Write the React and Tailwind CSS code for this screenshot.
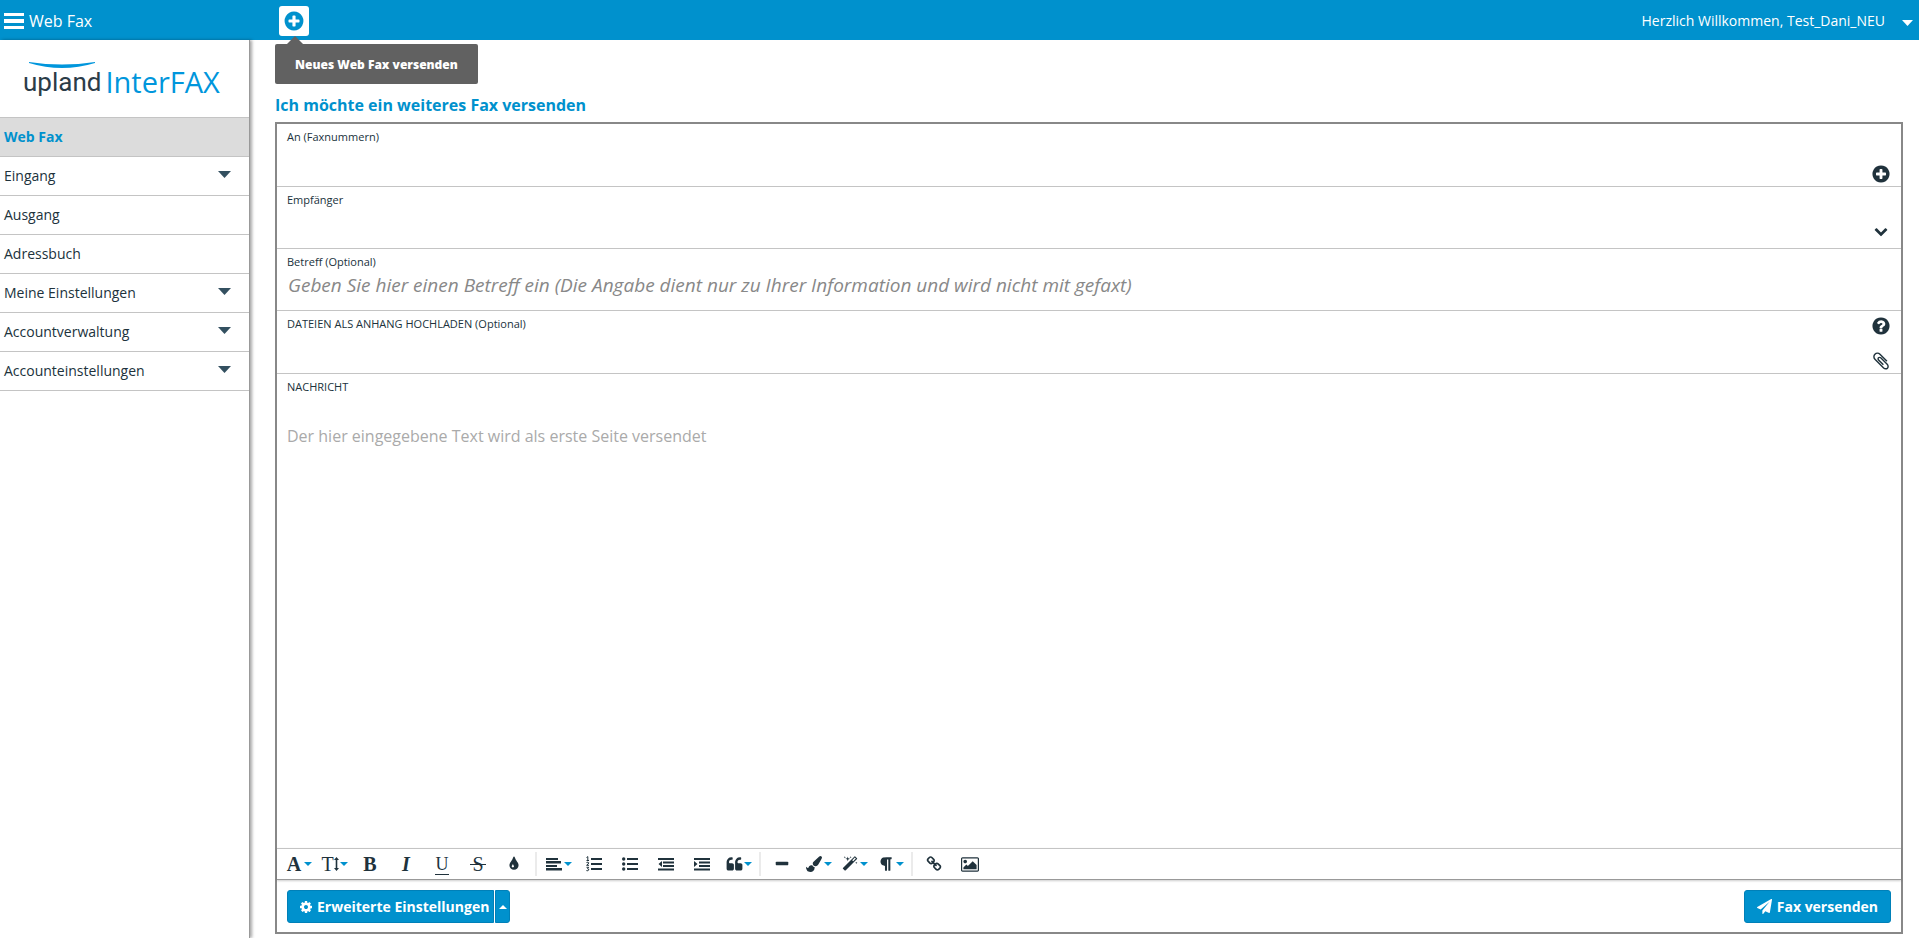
import { useState } from "react";
import clsx from "clsx";

const ICONS = {
  plusCircle:
    "M1344 960v-128q0-26-19-45t-45-19h-256v-256q0-26-19-45t-45-19h-128q-26 0-45 19t-19 45v256h-256q-26 0-45 19t-19 45v128q0 26 19 45t45 19h256v256q0 26 19 45t45 19h128q26 0 45-19t19-45v-256h256q26 0 45-19t19-45zm320-64q0 209-103 385.5t-279.5 279.5-385.5 103-385.5-103-279.5-279.5-103-385.5 103-385.5 279.5-279.5 385.5-103 385.5 103 279.5 279.5 103 385.5z",
  questionCircle:
    "M1024 1376v-192q0-14-9-23t-23-9h-192q-14 0-23 9t-9 23v192q0 14 9 23t23 9h192q14 0 23-9t9-23zm256-672q0-88-55.5-163t-138.5-116-170-41q-243 0-371 213-15 24 8 42l132 100q7 6 19 6 16 0 25-12 53-68 86-92 34-24 86-24 48 0 85.5 26t37.5 59q0 38-20 61t-68 45q-63 28-115.5 86.5t-52.5 125.5v36q0 14 9 23t23 9h192q14 0 23-9t9-23q0-19 21.5-49.5t54.5-49.5q32-18 49-28.5t46-35 44.5-48 28-60.5 12.5-81zm384 192q0 209-103 385.5t-279.5 279.5-385.5 103-385.5-103-279.5-279.5-103-385.5 103-385.5 279.5-279.5 385.5-103 385.5 103 279.5 279.5 103 385.5z",
  chevronDown:
    "M1683 808l-742 741q-19 19-45 19t-45-19l-742-741q-19-19-19-45.5t19-45.5l166-165q19-19 45-19t45 19l531 531 531-531q19-19 45-19t45 19l166 165q19 19 19 45.5t-19 45.5z",
  paperclip:
    "M1596 1385q0 117-79 196t-196 79q-135 0-235-100l-777-776q-113-115-113-271 0-159 110-270t269-111q158 0 273 113l605 606q10 10 10 22 0 16-30.5 46.5t-46.5 30.5q-13 0-23-10l-606-607q-79-77-181-77-106 0-179 75t-73 181q0 105 76 181l776 777q63 63 145 63 64 0 106-42t42-106q0-82-63-145l-581-581q-26-24-60-24-29 0-48 19t-19 48q0 32 25 59l410 410q10 10 10 22 0 16-31 47t-47 31q-12 0-22-10l-410-410q-63-61-63-149 0-82 57-139t139-57q88 0 149 63l581 581q100 98 100 235z",
  cog: "M1152 896q0-106-75-181t-181-75-181 75-75 181 75 181 181 75 181-75 75-181zm512-109v222q0 12-8 23t-20 13l-185 28q-19 54-39 91 35 50 107 138 10 12 10 25t-9 23q-27 37-99 108t-94 71q-12 0-26-9l-138-108q-44 23-91 38-16 136-29 186-7 28-36 28h-222q-14 0-24.5-8.5t-11.5-21.5l-28-184q-49-16-90-37l-141 107q-10 9-25 9-14 0-25-11-126-114-165-168-7-10-7-23 0-12 8-23 15-21 51-66.5t54-70.5q-27-50-41-99l-183-27q-13-2-21-12.5t-8-23.5v-222q0-12 8-23t19-13l186-28q14-46 39-92-40-57-107-138-10-12-10-24 0-10 9-23 26-36 98.5-107.5t94.5-71.5q13 0 26 10l138 107q44-23 91-38 16-136 29-186 7-28 36-28h222q14 0 24.5 8.5t11.5 21.5l28 184q49 16 90 37l142-107q9-9 24-9 13 0 25 10 129 119 165 170 7 8 7 22 0 12-8 23-15 21-51 66.5t-54 70.5q26 50 41 98l183 28q13 2 21 12.5t8 23.5z",
  paperPlane:
    "M1764 11q33 24 27 64l-256 1536q-5 29-32 45-14 8-31 8-11 0-24-5l-453-185-242 295q-18 23-49 23-13 0-22-4-19-7-30.5-23.5t-11.5-36.5v-349l864-1059-1069 925-395-162q-37-14-40-55-2-40 32-59l1664-960q15-9 32-9 20 0 36 11z",
  tint: "M896 1152q0-36-20-69-1-1-15.5-22.5t-25.5-38-25-44-21-50.5q-4-16-21-16t-21 16q-7 23-21 50.5t-25 44-25.5 38-15.5 22.5q-20 33-20 69 0 53 37.5 90.5t90.5 37.5 90.5-37.5 37.5-90.5zm512-128q0 212-150 362t-362 150-362-150-150-362q0-145 81-275 6-9 62.5-90.5t101-151 99.5-178 83-201.5q9-30 34-47t51-17 51.5 17 33.5 47q28 93 83 201.5t99.5 178 101 151 62.5 90.5q81 127 81 275z",
  quote:
    "M832 960v384q0 80-56 136t-136 56h-384q-80 0-136-56t-56-136v-704q0-104 40.5-198.5t109.5-163.5 163.5-109.5 198.5-40.5h64q26 0 45 19t19 45v128q0 26-19 45t-45 19h-64q-106 0-181 75t-75 181v32q0 40 28 68t68 28h224q80 0 136 56t56 136zm896 0v384q0 80-56 136t-136 56h-384q-80 0-136-56t-56-136v-704q0-104 40.5-198.5t109.5-163.5 163.5-109.5 198.5-40.5h64q26 0 45 19t19 45v128q0 26-19 45t-45 19h-64q-106 0-181 75t-75 181v32q0 40 28 68t68 28h224q80 0 136 56t56 136z",
  minus:
    "M1600 736v192q0 40-28 68t-68 28h-1216q-40 0-68-28t-28-68v-192q0-40 28-68t68-28h1216q40 0 68 28t28 68z",
  brush:
    "M1615 0q70 0 122.5 46.5t52.5 116.5q0 63-45 151-332 629-465 752-97 91-218 91-126 0-216.5-92.5t-90.5-219.5q0-128 92-212l638-579q59-54 130-54zm-909 1034q39 76 106.5 130t150.5 76l1 71q4 213-129.5 347t-348.5 134q-123 0-218-46.5t-152.5-127.5-86.5-183-29-220q7 5 41 30t62 44.5 59 36.5 46 17q41 0 55-37 25-66 57.5-112.5t69.5-76 88-47.5 103-25.5 125-10.5z",
  magic:
    "M1254 581l293-293-107-107-293 293zm447-293q0 27-18 45l-1286 1286q-18 18-45 18t-45-18l-198-198q-18-18-18-45t18-45l1286-1286q18-18 45-18t45 18l198 198q18 18 18 45zm-1351-190l98 30-98 30-30 98-30-98-98-30 98-30 30-98zm350 162l196 60-196 60-60 196-60-196-196-60 196-60 60-196zm930 478l98 30-98 30-30 98-30-98-98-30 98-30 30-98zm-640-640l98 30-98 30-30 98-30-98-98-30 98-30 30-98z",
  paragraph:
    "M1534 189v73q0 29-18.5 61t-42.5 32q-50 0-54 1-26 6-32 31-3 11-3 64v1152q0 25-18 43t-43 18h-108q-25 0-43-18t-18-43v-1218h-143v1218q0 25-17.5 43t-43.5 18h-108q-26 0-43.5-18t-17.5-43v-496q-147-12-245-59-126-58-192-179-64-117-64-259 0-166 88-286 88-118 209-159 111-37 417-37h479q25 0 43 18t18 43z",
  link: "M1520 1216q0-40-28-68l-208-208q-28-28-68-28-42 0-72 32 3 3 19 18.5t21.5 21.5 15 19 13 25.5 3.5 27.5q0 40-28 68t-68 28q-15 0-27.5-3.5t-25.5-13-19-15-21.5-21.5-18.5-19q-33 31-33 73 0 40 28 68l206 207q27 27 68 27 40 0 68-26l147-146q28-28 28-67zm-703-705q0-40-28-68l-206-207q-28-28-68-28-39 0-68 27l-147 146q-28 28-28 67 0 40 28 68l208 208q27 27 68 27 42 0 72-31-3-3-19-18.5t-21.5-21.5-15-19-13-25.5-3.5-27.5q0-40 28-68t68-28q15 0 27.5 3.5t25.5 13 19 15 21.5 21.5 18.5 19q33-31 33-73zm895 705q0 120-85 203l-147 146q-83 83-203 83-121 0-204-85l-206-207q-83-83-83-203 0-123 88-209l-88-88q-86 88-208 88-120 0-204-84l-208-208q-84-84-84-204t85-203l147-146q83-83 203-83 121 0 204 85l206 207q83 83 83 203 0 123-88 209l88 88q86-88 208-88 120 0 204 84l208 208q84 84 84 204z",
  image:
    "M576 576q0 80-56 136t-136 56-136-56-56-136 56-136 136-56 136 56 56 136zm1024 384v448h-1408v-192l320-320 160 160 512-512zm96-704h-1600q-13 0-22.5 9.5t-9.5 22.5v1216q0 13 9.5 22.5t22.5 9.5h1600q13 0 22.5-9.5t9.5-22.5v-1216q0-13-9.5-22.5t-22.5-9.5zm160 32v1216q0 66-47 113t-113 47h-1600q-66 0-113-47t-47-113v-1216q0-66 47-113t113-47h1600q66 0 113 47t47 113z",
};

function Icon({ name, className }) {
  return (
    <svg
      viewBox={name === "image" ? "-64 0 1920 1792" : "0 0 1792 1792"}
      className={clsx("shrink-0 fill-current", className)}
      aria-hidden="true"
    >
      <path d={ICONS[name]} />
    </svg>
  );
}

function Caret({ className, up = false }) {
  return (
    <svg
      viewBox="0 0 8 4"
      preserveAspectRatio="none"
      className={clsx("shrink-0 fill-current", className)}
      aria-hidden="true"
    >
      <path d={up ? "M0 4h8L4 0z" : "M0 0h8L4 4z"} />
    </svg>
  );
}

// 16x14 line icons: lists, indents, alignment
function Lines({ children }) {
  return (
    <svg viewBox="0 0 16 14" className="h-[14px] w-4 fill-current" aria-hidden="true">
      {children}
    </svg>
  );
}

function Letter({ children, className }) {
  return (
    <span className={clsx("font-['Liberation_Serif',serif] leading-5", className)}>
      {children}
    </span>
  );
}

const menu = [
  { label: "Web Fax", active: true },
  { label: "Eingang", children: true },
  { label: "Ausgang" },
  { label: "Adressbuch" },
  { label: "Meine Einstellungen", children: true },
  { label: "Accountverwaltung", children: true },
  { label: "Accounteinstellungen", children: true },
];

const toolbar = [
  [
    { title: "Schriftart", menu: true, icon: <Letter className="text-xl font-bold">A</Letter> },
    {
      title: "Schriftgröße",
      menu: true,
      icon: (
        <span className="flex items-center">
          <Letter className="text-xl">T</Letter>
          <svg viewBox="0 0 5 14" className="h-[14px] w-[5px] fill-current" aria-hidden="true">
            <path d="M2.500 0L5 3H3.300v8H5l-2.500 3L0 11h1.700V3H0z" />
          </svg>
        </span>
      ),
    },
    { title: "Fett", icon: <Letter className="text-xl font-bold">B</Letter> },
    { title: "Kursiv", icon: <Letter className="text-xl font-bold italic">I</Letter> },
    {
      title: "Unterstrichen",
      icon: (
        <span className="flex w-[14px] justify-center border-b border-current">
          <Letter className="text-lg/[15px] font-medium">U</Letter>
        </span>
      ),
    },
    {
      title: "Durchgestrichen",
      icon: (
        <span className="relative flex w-4 justify-center">
          <Letter className="text-xl">S</Letter>
          <span className="absolute inset-x-0 top-[10px] h-px bg-current" />
        </span>
      ),
    },
    { title: "Farben", icon: <Icon name="tint" className="size-4" /> },
  ],
  [
    {
      title: "Ausrichten",
      menu: true,
      icon: (
        <Lines>
          <path d="M0 1h12v2H0zM0 4h15v2.500H0zM0 8h11v2H0zM0 11h16v2.500H0z" />
        </Lines>
      ),
    },
    {
      title: "Nummerierte Liste",
      icon: (
        <svg viewBox="0 0 16 16" className="size-4 fill-current" aria-hidden="true">
          <path d="M5 2h11v2H5zM5 7h11v2H5zM5 12h11v2H5z" />
          <path
            d="M.5 1.500L1.800.6V4.500M.5 4.500H3M.5 6.500q2-1 2.200.3Q2.600 8 .6 9.300H3M.5 11.300h2.200L1.500 12.700q1.500 0 1.300 1.200-.6 1.300-2.400.7"
            className="fill-none stroke-current"
          />
        </svg>
      ),
    },
    {
      title: "Aufzählung",
      icon: (
        <Lines>
          <path d="M5 1h11v2H5zM5 6h11v2H5zM5 11h11v2H5z" />
          <circle cx="1.700" cy="2" r="1.700" />
          <circle cx="1.700" cy="7" r="1.700" />
          <circle cx="1.700" cy="12" r="1.700" />
        </Lines>
      ),
    },
    {
      title: "Einzug verkleinern",
      icon: (
        <Lines>
          <path d="M0 1h16v2H0zM5 4.500h11v2H5zM5 8h11v2H5zM0 11.500h16v2H0zM4 4v6L.5 7z" />
        </Lines>
      ),
    },
    {
      title: "Einzug vergrößern",
      icon: (
        <Lines>
          <path d="M0 1h16v2H0zM5 4.500h11v2H5zM5 8h11v2H5zM0 11.500h16v2H0zM0 4v6l3.500-3z" />
        </Lines>
      ),
    },
    { title: "Zitat", menu: true, icon: <Icon name="quote" className="size-[17px]" /> },
  ],
  [
    { title: "Horizontale Linie", icon: <Icon name="minus" className="size-4" /> },
    { title: "Absatzstil", menu: true, icon: <Icon name="brush" className="size-4" /> },
    { title: "Inline-Stil", menu: true, icon: <Icon name="magic" className="size-4" /> },
    { title: "Absatzformat", menu: true, icon: <Icon name="paragraph" className="size-4" /> },
  ],
  [
    { title: "Link einfügen", icon: <Icon name="link" className="size-4" /> },
    { title: "Bild einfügen", icon: <Icon name="image" className="h-[17px] w-[18px]" /> },
  ],
];

function Header() {
  return (
    <header className="flex h-10 items-center bg-[#0091cd] pt-[2px] text-white">
      <div className="flex w-[279px] items-center gap-[5px] pl-1">
        <button type="button" aria-label="Menü" className="flex w-5 flex-col gap-[3px]">
          <span className="h-[3px] bg-white" />
          <span className="h-[4px] bg-white" />
          <span className="h-[3px] bg-white" />
        </button>
        <span className="text-base">Web Fax</span>
      </div>

      <div className="relative">
        <button
          type="button"
          aria-describedby="new-fax-tip"
          aria-label="Neues Web Fax"
          className="flex size-[30px] items-center justify-center rounded-[3px] bg-white text-[#0091cd]"
        >
          <Icon name="plusCircle" className="size-[22px]" />
        </button>
        <div
          id="new-fax-tip"
          role="tooltip"
          className="absolute top-[38px] -left-1 z-10 rounded-[2px] bg-[#616161] px-5 pt-px text-xs leading-[39px] font-extrabold whitespace-nowrap"
        >
          <Caret up className="absolute -top-2 left-3 h-2 w-4 text-[#616161]" />
          Neues Web Fax versenden
        </div>
      </div>

      <button type="button" className="ml-auto flex items-center gap-[17px] pr-[6px] text-sm">
        Herzlich Willkommen, Test_Dani_NEU
        <Caret className="mt-1 h-[6px] w-[11px]" />
      </button>
    </header>
  );
}

function Sidebar() {
  return (
    <aside className="w-[250px] shrink-0 border-r border-[#999] shadow-[2px_0_3px_rgba(0,0,0,0.35)]">
      <a href="#" aria-label="upland InterFAX" className="flex h-[77px] items-end gap-1 pb-[19px] pl-[23px]">
        <span className="relative font-['Roboto',sans-serif] text-[26px] leading-8 text-[#2b3c48]">
          upland
          <svg
            viewBox="0 0 66 6"
            className="absolute -top-1 left-[6px] h-[6px] w-[66px] fill-[#0096dc]"
            aria-hidden="true"
          >
            <path d="M0 0Q33 5 66 0V1Q33 11 0 1z" />
          </svg>
        </span>
        <span className="text-[29px] leading-8 text-[#0096dc]">InterFAX</span>
      </a>
      <nav className="border-t border-[#c4c4c4]">
        {menu.map((item) => (
          <a
            key={item.label}
            href="#"
            className={clsx(
              "flex h-[39px] items-center justify-between border-b border-[#c4c4c4] pr-[18px] pl-1 text-sm",
              item.active && "bg-[#dcdcdc] font-bold text-[#0091cd]",
            )}
          >
            {item.label}
            {item.children && <Caret className="mb-[3px] h-[7px] w-[13px] text-[#335060]" />}
          </a>
        ))}
      </nav>
    </aside>
  );
}

function Toolbar() {
  return (
    <div
      role="toolbar"
      aria-label="Textformatierung"
      className="flex h-8 items-center border-t border-b border-t-[#c4c4c4] border-b-[#999] pl-[3px] shadow-[0_1px_2px_rgba(0,0,0,0.2)]"
    >
      {toolbar.map((group, i) => (
        <div key={i} className="flex items-center">
          {i > 0 && <span className="mx-[3px] h-6 w-[2px] bg-[#ebebeb]" />}
          {group.map((item) => (
            <button
              key={item.title}
              type="button"
              title={item.title}
              className={clsx("flex h-[30px] w-9 items-center", item.menu ? "pl-1" : "justify-center")}
            >
              {item.menu ? (
                <>
                  <span className="flex w-5 justify-center">{item.icon}</span>
                  <Caret className="h-1 w-2 text-[#0091cd]" />
                </>
              ) : (
                item.icon
              )}
            </button>
          ))}
        </div>
      ))}
    </div>
  );
}

const row = "relative flex flex-col border-b border-[#c4c4c4] px-[10px] pt-[5px]";
const label = "text-[11px] leading-[15px]";

function FaxForm() {
  const [subject, setSubject] = useState("");
  const [message, setMessage] = useState("");

  return (
    <form
      onSubmit={(e) => e.preventDefault()}
      className="flex flex-1 flex-col border-2 border-[#888]"
    >
      <div className={clsx(row, "h-[63px]")}>
        <label htmlFor="to" className={label}>
          An (Faxnummern)
        </label>
        <div className="flex flex-1 items-end">
          <input id="to" className="h-8 flex-1 outline-none" />
          <button type="button" aria-label="Hinzufügen" className="pb-[2px]">
            <Icon name="plusCircle" className="size-5" />
          </button>
        </div>
      </div>

      <div className={clsx(row, "h-[62px]")}>
        <label htmlFor="recipient" className={label}>
          Empfänger
        </label>
        <div className="flex flex-1 items-center">
          <select id="recipient" className="h-8 flex-1 appearance-none outline-none">
            <option></option>
          </select>
          <Icon name="chevronDown" className="mt-[6px] mr-[3px] size-[14px]" />
        </div>
      </div>

      <div className={clsx(row, "h-[62px]")}>
        <label htmlFor="subject" className={label}>
          Betreff (Optional)
        </label>
        <input
          id="subject"
          value={subject}
          onChange={(e) => setSubject(e.target.value)}
          placeholder="Geben Sie hier einen Betreff ein (Die Angabe dient nur zu Ihrer Information und wird nicht mit gefaxt)"
          className="h-8 pl-px text-[19px] italic outline-none placeholder:text-[#888]"
        />
      </div>

      <div className={clsx(row, "h-[63px]")}>
        <div className="flex items-start justify-between">
          <label htmlFor="files" className={label}>
            DATEIEN ALS ANHANG HOCHLADEN (Optional)
          </label>
          <button type="button" aria-label="Hilfe">
            <Icon name="questionCircle" className="size-5" />
          </button>
        </div>
        <label htmlFor="files" className="mt-[15px] self-end" aria-label="Datei auswählen">
          <Icon name="paperclip" className="size-5" />
        </label>
        <input id="files" type="file" className="sr-only" />
      </div>

      <div className="flex flex-1 flex-col px-[10px] pt-[5px]">
        <label htmlFor="message" className={label}>
          NACHRICHT
        </label>
        <textarea
          id="message"
          value={message}
          onChange={(e) => setMessage(e.target.value)}
          placeholder="Der hier eingegebene Text wird als erste Seite versendet"
          className="mt-[30px] flex-1 resize-none text-base outline-none placeholder:text-[#aaa]"
        />
      </div>

      <Toolbar />

      <div className="flex justify-between px-[10px] pt-[10px] pb-[9px] text-sm font-bold text-white">
        <div className="flex gap-px">
          <button
            type="button"
            className="flex h-[33px] items-center gap-1 rounded-l-[3px] border border-[#0080b8] bg-[#0091cd] pr-1 pl-[11px]"
          >
            <Icon name="cog" className="size-[14px]" />
            Erweiterte Einstellungen
          </button>
          <button
            type="button"
            aria-label="Weitere Optionen"
            className="flex w-[15px] items-center justify-center rounded-r-[3px] border border-[#0080b8] bg-[#0091cd]"
          >
            <Caret up className="h-1 w-2" />
          </button>
        </div>
        <button
          type="submit"
          className="flex h-[33px] items-center gap-[5px] rounded-[3px] border border-[#0080b8] bg-[#0091cd] px-3"
        >
          <Icon name="paperPlane" className="size-[15px]" />
          Fax versenden
        </button>
      </div>
    </form>
  );
}

export default function App() {
  return (
    <div className="flex min-h-screen flex-col bg-white font-['Open_Sans',sans-serif] text-[#20323c]">
      <Header />
      <div className="flex flex-1">
        <Sidebar />
        <main className="flex flex-1 flex-col pt-[53px] pr-4 pb-1 pl-[25px]">
          <h1 className="mb-[5px] text-base font-bold text-[#0091cd]">
            Ich möchte ein weiteres Fax versenden
          </h1>
          <FaxForm />
        </main>
      </div>
    </div>
  );
}
